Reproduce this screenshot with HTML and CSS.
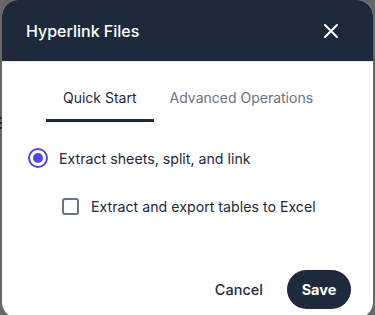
FILE: index.html
```html
<!DOCTYPE html>
<html>
<head>
<meta charset="utf-8">
<link rel="stylesheet" href="styles.css">
</head>
<body>
<div class="backdrop-mark"><span></span><span></span><span></span></div>
<div class="modal">
  <div class="header">
    <div class="title">Hyperlink Files</div>
    <svg class="close" width="16" height="16" viewBox="0 0 16 16"><path d="M2 2L14 14M14 2L2 14" stroke="#fff" stroke-width="2" stroke-linecap="round"/></svg>
  </div>
  <div class="tabs">
    <div class="tab active">Quick Start</div>
    <div class="tab">Advanced Operations</div>
  </div>
  <div class="body">
    <div class="option radio-row">
      <span class="radio"><span class="dot"></span></span>
      <span class="label">Extract sheets, split, and link</span>
    </div>
    <div class="option check-row">
      <span class="checkbox"></span>
      <span class="label">Extract and export tables to Excel</span>
    </div>
  </div>
  <div class="footer">
    <button class="btn cancel">Cancel</button>
    <button class="btn save">Save</button>
  </div>
</div>
</body>
</html>
```
FILE: styles.css
```css
html, body { margin: 0; padding: 0; }
body {
  background: #676767;
  width: 375px;
  height: 315px;
  overflow: hidden;
  position: relative;
  font-family: Inter, "Noto Sans", sans-serif;
}
.backdrop-mark {
  position: absolute;
  left: 0;
  top: 117px;
  width: 2px;
  display: flex;
  flex-direction: column;
  gap: 3px;
}
.backdrop-mark span {
  display: block;
  height: 2px;
  background: #2a2a2a;
}
.modal {
  position: relative;
  margin-left: 2px;
  width: 371px;
  height: 318px;
  background: #fff;
  border-radius: 16px;
  overflow: hidden;
  display: flex;
  flex-direction: column;
}
.header {
  height: 62px;
  background: #1e293b;
  display: flex;
  align-items: center;
  justify-content: space-between;
  padding: 0 34px 0 24px;
  border-bottom: 1px solid #e5e7eb;
  box-sizing: border-box;
}
.title {
  color: #fff;
  font-size: 16px;
  font-weight: 500;
  margin-top: 1px;
}
.close { display: block; margin-top: 1px; }
.tabs {
  display: flex;
  padding-left: 44px;
  margin-top: 16px;
}
.tab {
  font-size: 14px;
  color: #6b7280;
  padding: 11px 16px 13px;
  border-bottom: 3px solid transparent;
}
.tab.active {
  color: #1e293b;
  border-bottom-color: #1e293b;
  padding-left: 17px;
  padding-right: 17px;
}
.body {
  display: flex;
  flex-direction: column;
  padding-left: 26px;
  margin-top: 26px;
}
.option {
  display: flex;
  align-items: center;
  color: #1e293b;
  font-size: 14.2px;
}
.radio {
  width: 20px;
  height: 20px;
  box-sizing: border-box;
  border: 2px solid #4f46e5;
  border-radius: 50%;
  display: flex;
  align-items: center;
  justify-content: center;
  margin-right: 11px;
}
.dot {
  width: 10px;
  height: 10px;
  border-radius: 50%;
  background: #4f46e5;
}
.check-row {
  margin-top: 30px;
  padding-left: 34px;
}
.checkbox {
  width: 17px;
  height: 17px;
  box-sizing: border-box;
  border: 2px solid #64748b;
  border-radius: 3px;
  margin-right: 12px;
}
.footer {
  display: flex;
  justify-content: flex-end;
  align-items: center;
  padding-right: 22px;
  margin-top: 55px;
}
.btn {
  font-family: Inter, "Noto Sans", sans-serif;
  font-size: 14.5px;
  border: none;
  cursor: pointer;
}
.cancel {
  background: transparent;
  color: #1e293b;
  font-weight: 500;
  padding: 0;
  margin-right: 24px;
}
.save {
  background: #1e293b;
  color: #fff;
  font-weight: 700;
  height: 39px;
  width: 64px;
  border-radius: 20px;
}
```
